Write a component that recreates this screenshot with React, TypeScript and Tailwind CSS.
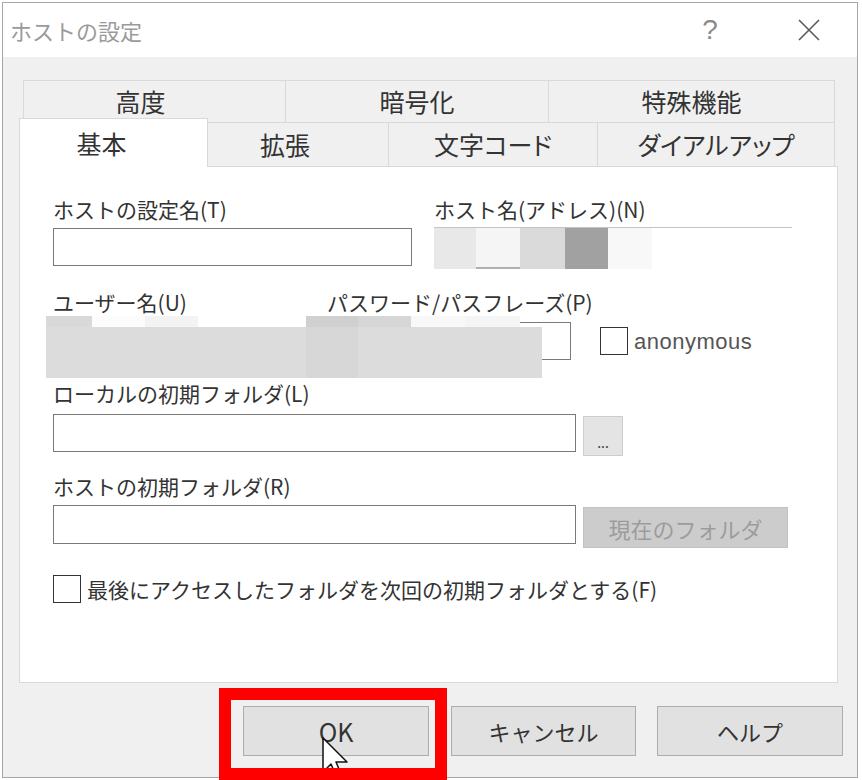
import React from 'react';

const FONT = { fontFamily: '"Noto Sans CJK JP", "Noto Sans", sans-serif' };

function Field({ w, h = 38, className = '' }: { w: number; h?: number; className?: string }) {
  return <div className={`bg-white border border-[#7a7a7a] ${className}`} style={{ width: w, height: h }} />;
}

function Label({ children, className = '' }: { children: React.ReactNode; className?: string }) {
  return <div className={`text-[21px] leading-[24px] text-[#333] whitespace-nowrap ${className}`}>{children}</div>;
}

function Check({ size = 28 }: { size?: number }) {
  return <div className="bg-white border-[1.5px] border-[#333] shrink-0" style={{ width: size, height: size }} />;
}

const ROW1 = [
  { label: '高度', w: 262, pr: 'pr-[28px]' },
  { label: '暗号化', w: 263, pr: '' },
  { label: '特殊機能', w: 287, pr: '' },
];

const ROW2 = [
  { label: '拡張', w: 180, pr: 'pr-[26px]' },
  { label: '文字コード', w: 209, pr: '' },
  { label: 'ダイアルアップ', w: 238, pr: '' },
];

// blurred blocks over the user / password fields
const STRIP = [
  { w: 46, c: '#d9d9d9' }, { w: 53, c: '#fcfcfc' }, { w: 53, c: '#f3f3f3' }, { w: 108, c: '#ffffff' },
  { w: 52, c: '#d0d0d0' }, { w: 53, c: '#d6d6d6' }, { w: 54, c: '#f8f8f8' }, { w: 55, c: '#f5f5f5' },
];
const HOST_BLOCKS = [
  { w: 42, c: '#e8e8e8' }, { w: 44, c: '#f5f5f5' }, { w: 45, c: '#dadada' }, { w: 43, c: '#a1a1a1' }, { w: 44, c: '#f8f8f8' },
];

export default function App() {
  return (
    <div className="relative w-[862px] h-[780px] bg-white overflow-hidden" style={FONT}>
      <div className="ml-[2px] mt-[2px] w-[856px] h-[776px] border border-[#a6a6a6] bg-[#f0f0f0] flex flex-col">
        {/* Title bar */}
        <div className="h-[54px] bg-white flex items-center pl-[7px] shrink-0">
          <span className="text-[22px] text-[#9a9a9a]">ホストの設定</span>
          <div className="ml-auto flex items-center pr-[28px]">
            <span className="w-[40px] text-center text-[28px] leading-none text-[#8a8a8a]" style={{ fontFamily: '"Liberation Sans", sans-serif', fontWeight: 300 }}>?</span>
            <div className="w-[40px] ml-[59px] flex justify-center">
              <svg width="22" height="22" viewBox="0 0 22 22">
                <path d="M1 1 L21 21 M21 1 L1 21" stroke="#5a5a5a" strokeWidth="1.6" fill="none" />
              </svg>
            </div>
          </div>
        </div>

        {/* Body */}
        <div className="pt-[23px] flex flex-col">
          {/* tab row 1 */}
          <div className="ml-[20px] flex h-[42px]" style={{ width: 812 }}>
            {ROW1.map((t, i) => (
              <div
                key={t.label}
                className={`flex items-center justify-center border-t border-l border-[#d9d9d9] bg-[#f0f0f0] text-[25px] text-[#333] leading-none [font-feature-settings:'palt'] ${i === ROW1.length - 1 ? 'border-r' : ''} ${t.pr}`}
                style={{ width: t.w }}
              >
                {t.label}
              </div>
            ))}
          </div>
          {/* tab row 2 */}
          <div className="ml-[16px] flex h-[44px]" style={{ width: 816 }}>
            <div className="relative z-10 -mt-[4px] -mb-px w-[189px] bg-white border-t border-l border-r border-[#d9d9d9] flex items-center justify-center pr-[24px] text-[25px] text-[#333] leading-none">
              基本
            </div>
            {ROW2.map((t, i) => (
              <div
                key={t.label}
                className={`flex items-center justify-center border-t border-[#d9d9d9] bg-[#f0f0f0] text-[25px] text-[#333] leading-none [font-feature-settings:'palt'] ${i > 0 ? 'border-l' : ''} ${i === ROW2.length - 1 ? 'border-r' : ''} ${t.pr}`}
                style={{ width: t.w }}
              >
                {t.label}
              </div>
            ))}
          </div>

          {/* Panel */}
          <div className="relative ml-[16px] w-[819px] h-[517px] bg-white border border-[#d9d9d9] pl-[33px] pt-[30px] flex flex-col">
            {/* host setting name / host name */}
            <div className="flex gap-[22px]">
              <div className="flex flex-col gap-[7px]">
                <Label>ホストの設定名(T)</Label>
                <Field w={359} />
              </div>
              <div className="flex flex-col gap-[6px]">
                <Label>ホスト名(アドレス)(N)</Label>
                <div className="w-[358px] h-[42px] border-t border-[#c4c4c4] flex">
                  {HOST_BLOCKS.map((b, i) => (
                    <div key={i} className={i === 1 ? 'border-b-2 border-[#b0b0b0]' : ''} style={{ width: b.w, height: 41, background: b.c }} />
                  ))}
                </div>
              </div>
            </div>

            {/* user / password */}
            <div className="flex mt-[21px]">
              <Label className="w-[274px]">ユーザー名(U)</Label>
              <Label>パスワード/パスフレーズ(P)</Label>
            </div>
            <div className="flex items-center mt-[8px] h-[38px]">
              <Field w={252} />
              <Field w={244} className="ml-[22px]" />
              <div className="ml-[29px] flex items-center gap-[6px]">
                <Check size={28} />
                <span className="text-[22px] text-[#555] tracking-[0.5px]" style={{ fontFamily: '"Liberation Sans", sans-serif' }}>anonymous</span>
              </div>
            </div>

            {/* local folder */}
            <Label className="mt-[21px]">ローカルの初期フォルダ(L)</Label>
            <div className="flex items-start mt-[9px]">
              <Field w={523} h={38} />
              <div className="ml-[7px] mt-[2px] w-[40px] h-[40px] bg-[#e4e4e4] border border-[#cdcdcd] flex items-end justify-center pb-[6px] text-[14px] leading-none text-[#444]">
                ...
              </div>
            </div>

            {/* host folder */}
            <Label className="mt-[18px]">ホストの初期フォルダ(R)</Label>
            <div className="flex items-start mt-[7px]">
              <Field w={523} h={39} />
              <div className="ml-[7px] mt-[2px] w-[205px] h-[41px] bg-[#cccccc] border border-[#c2c2c2] flex items-center justify-center text-[22px] leading-none text-[#9c9c9c]">
                現在のフォルダ
              </div>
            </div>

            {/* checkbox */}
            <div className="flex items-center gap-[6px] mt-[27px]">
              <Check size={28} />
              <Label>最後にアクセスしたフォルダを次回の初期フォルダとする(F)</Label>
            </div>

            {/* blurred region over user/password */}
            <div className="absolute left-[26px] top-[149px] w-[496px] flex flex-col">
              <div className="flex h-[11px]">
                {STRIP.map((b, i) => (
                  <div key={i} style={{ width: b.w, background: b.c }} />
                ))}
              </div>
              <div className="flex h-[51px]">
                <div className="w-[260px] bg-[#dcdcdc]" />
                <div className="w-[52px] bg-[#d7d7d7]" />
                <div className="w-[184px] bg-[#dcdcdc]" />
              </div>
            </div>
          </div>

          {/* Buttons */}
          <div className="flex mt-[23px] ml-[240px] h-[50px]">
            <div className="w-[186px] h-[50px] bg-[#e1e1e1] border border-[#adadad] flex items-center justify-center text-[25px] text-[#333] leading-none">OK</div>
            <div className="ml-[22px] w-[185px] h-[50px] bg-[#e1e1e1] border border-[#adadad] flex items-center justify-center text-[22px] text-[#333] leading-none">キャンセル</div>
            <div className="ml-[21px] w-[186px] h-[50px] bg-[#e1e1e1] border border-[#adadad] flex items-center justify-center text-[22px] text-[#333] leading-none">ヘルプ</div>
          </div>
        </div>
      </div>

      {/* mouse cursor */}
      <svg className="absolute left-[322px] top-[737px]" width="30" height="44" viewBox="0 0 30 44">
        <path d="M1 1 L1 35 L9 27 L15 41 L20 39 L14 25 L25 25 Z" fill="#ffffff" stroke="#111" strokeWidth="1.5" strokeLinejoin="round" />
      </svg>

      {/* red highlight box */}
      <div className="absolute left-[219px] top-[688px] w-[228px] h-[92px] border-[12px] border-[#ff0000]" />
    </div>
  );
}
